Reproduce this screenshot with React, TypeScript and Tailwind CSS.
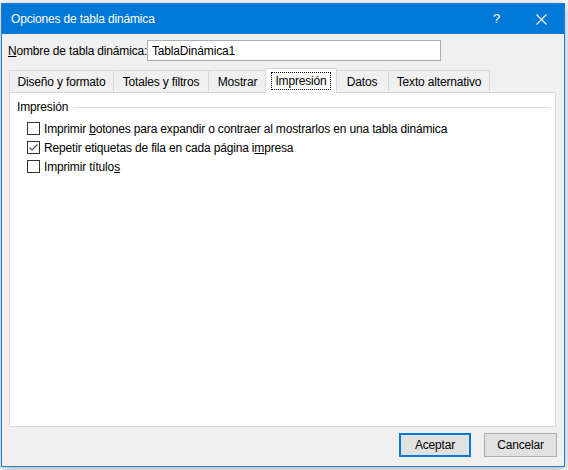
export default function App() {
    const font = { fontFamily: '"Segoe UI", "Liberation Sans", Arial, sans-serif' };
    const tabs = [
        { t: 'Diseño y formato', w: 'w-[105px]' },
        { t: 'Totales y filtros', w: 'w-[96px]' },
        { t: 'Mostrar', w: 'w-[59px]' },
        { t: 'Impresión', w: 'w-[72px]' },
        { t: 'Datos', w: 'w-[54px]' },
        { t: 'Texto alternativo', w: 'w-[102px]' },
    ];

    return (
        <div className="w-[568px] h-[470px] bg-white overflow-hidden pt-[3px] pl-[1px] tracking-[-0.17px]" style={font}>
            {/* Dialog */}
            <div className="w-[564px] h-[464px] border border-[#1a7fd6] bg-[#f0f0f0] flex flex-col shadow-[0_2px_10px_rgba(0,0,0,0.35)]">
                {/* Title bar */}
                <div className="h-[30px] bg-[#0078d7] flex items-center text-white text-[12px] shrink-0">
                    <span className="pl-[9px] flex-1 whitespace-nowrap">Opciones de tabla dinámica</span>
                    <span className="w-[45px] text-center text-[13px]">?</span>
                    <span className="w-[45px] flex items-center justify-center">
                        <svg width="11" height="11" viewBox="0 0 11 11">
                            <path d="M0.5 0.5 L10.5 10.5 M10.5 0.5 L0.5 10.5" stroke="white" strokeWidth="1.1" />
                        </svg>
                    </span>
                </div>

                {/* Name row */}
                <div className="flex items-center mt-[6px] pl-[6px] text-[12px] text-black h-[21px]">
                    <span className="w-[139px] whitespace-nowrap"><u>N</u>ombre de tabla dinámica:</span>
                    <div className="w-[294px] h-[21px] bg-white border border-[#adadad] flex items-center pl-[4px]">
                        TablaDinámica1
                    </div>
                </div>

                {/* Tabs */}
                <div className="flex items-end mt-[7px] ml-[7px] h-[24px] text-[12px] text-black relative z-10 whitespace-nowrap">
                    {tabs.map(({ t, w }) =>
                        t === 'Impresión' ? (
                            <div
                                key={t}
                                className={`${w} h-[25px] -mb-[1px] -ml-[2px] -mr-[1px] bg-white border border-b-0 border-[#d9d9d9] flex items-center justify-center relative z-10`}
                            >
                                <span className="border border-dotted border-black px-[3px] leading-[16px]">{t}</span>
                            </div>
                        ) : (
                            <div
                                key={t}
                                className={`${w} h-[22px] bg-[#f0f0f0] border border-b-0 border-[#d9d9d9] -ml-[1px] first:ml-0 flex items-center justify-center`}
                            >
                                {t}
                            </div>
                        )
                    )}
                </div>

                {/* Panel */}
                <div className="ml-[7px] w-[547px] h-[335px] bg-white border border-[#d9d9d9] text-[12px] text-black">
                    <div className="flex items-center mt-[5px] ml-[7px] mr-[5px]">
                        <span>Impresión</span>
                        <div className="flex-1 h-px bg-[#dcdcdc] ml-[6px]" />
                    </div>
                    <div className="flex flex-col gap-[6px] mt-[6px] ml-[17px]">
                        <label className="flex items-center gap-[4px] h-[13px] whitespace-nowrap">
                            <span className="w-[13px] h-[13px] border border-[#333] bg-white" />
                            <span>Imprimir <u>b</u>otones para expandir o contraer al mostrarlos en una tabla dinámica</span>
                        </label>
                        <label className="flex items-center gap-[4px] h-[13px] whitespace-nowrap">
                            <span className="w-[13px] h-[13px] border border-[#333] bg-white flex items-center justify-center">
                                <svg width="11" height="11" viewBox="0 0 11 11">
                                    <path d="M1.5 5.5 L4 8 L9.5 2.5" fill="none" stroke="#555" strokeWidth="1.2" />
                                </svg>
                            </span>
                            <span>Repetir etiquetas de fila en cada página i<u>m</u>presa</span>
                        </label>
                        <label className="flex items-center gap-[4px] h-[13px] whitespace-nowrap">
                            <span className="w-[13px] h-[13px] border border-[#333] bg-white" />
                            <span>Imprimir título<u>s</u></span>
                        </label>
                    </div>
                </div>

                {/* Buttons */}
                <div className="flex justify-end gap-[13px] mt-[6px] mr-[7px] text-[12px] text-black">
                    <button className="w-[72px] h-[24px] bg-[#e1e1e1] border-2 border-[#0078d7]">Aceptar</button>
                    <button className="w-[73px] h-[24px] bg-[#e1e1e1] border border-[#adadad]">Cancelar</button>
                </div>
            </div>
        </div>
    );
}
